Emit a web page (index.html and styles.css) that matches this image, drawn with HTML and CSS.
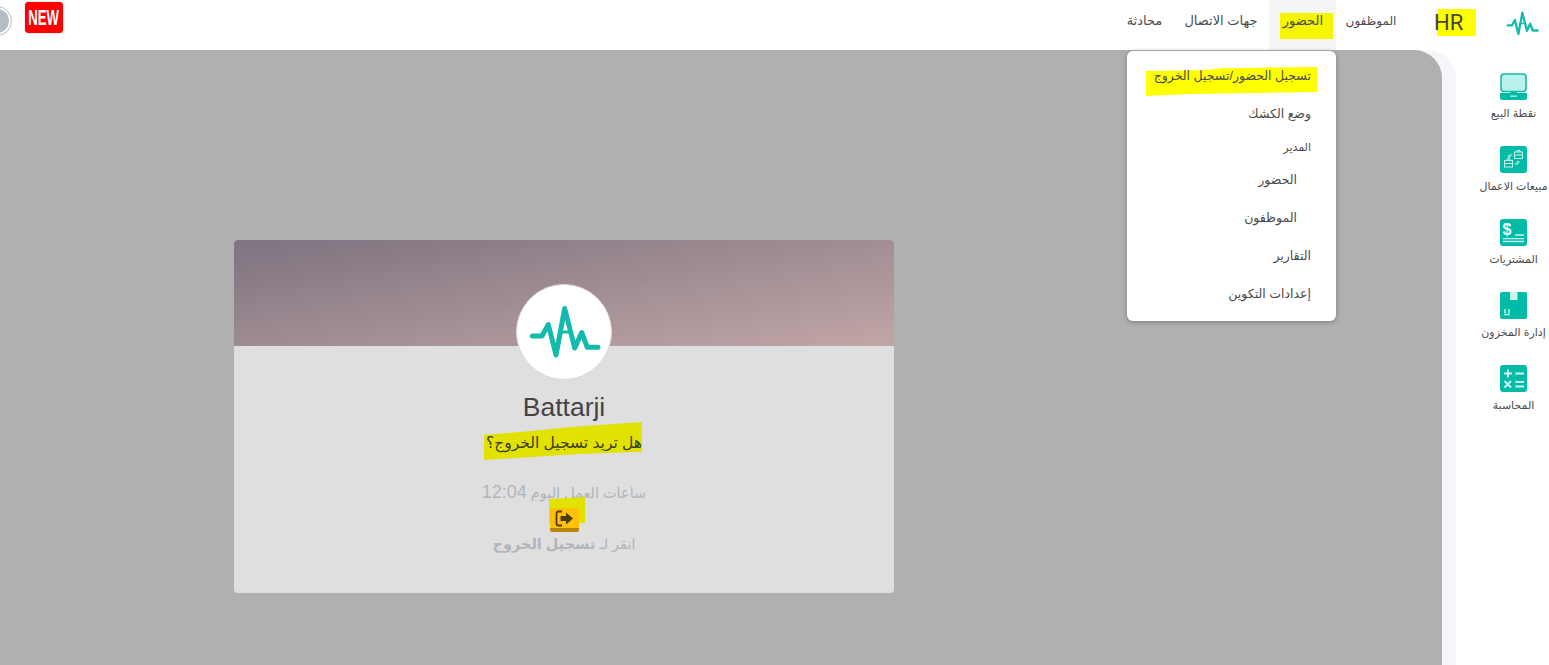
FILE: index.html
```html
<!DOCTYPE html>
<html lang="ar" dir="rtl">
<head>
    <meta charset="UTF-8">
    <meta name="viewport" content="width=device-width, initial-scale=1.0">
    <title>Battarji</title>
    <link rel="stylesheet" href="styles.css">
</head>
<body>
    <svg class="defs" width="0" height="0">
        <symbol id="pulse" viewBox="0 0 72 54">
            <path d="M3.5 31H13L19.3 19.5 27 50 35.7 3.5 45.7 43 52.7 27.5 58.3 42.3H69" fill="none" stroke="#12bbaa" stroke-width="5" stroke-linecap="round" stroke-linejoin="round"/>
            <path d="M32 27H41" stroke="#12bbaa" stroke-width="3"/>
        </symbol>
    </svg>

    <header class="topbar">
        <svg class="top-logo"><use href="#pulse"/></svg>
        <div class="app-name"><span class="mark mark-hr"></span><span class="app-text">HR</span></div>
        <nav class="nav">
            <a class="nav-item nav-staff">الموظفون</a>
            <a class="nav-item nav-attendance active"><span class="mark mark-nav"></span><span class="nav-text">الحضور</span>
                <div class="menu">
                    <div class="menu-item first"><span class="mark mark-menu"></span><span class="nav-text">تسجيل الحضور/تسجيل الخروج</span></div>
                    <div class="menu-item">وضع الكشك</div>
                    <div class="menu-head">المدير</div>
                    <div class="menu-item sub">الحضور</div>
                    <div class="menu-item sub">الموظفون</div>
                    <div class="menu-item">التقارير</div>
                    <div class="menu-item">إعدادات التكوين</div>
                </div>
            </a>
            <a class="nav-item nav-contacts">جهات الاتصال</a>
            <a class="nav-item nav-chat">محادثة</a>
        </nav>
        <div class="top-left">
            <div class="new-badge" dir="ltr"><span class="new-text">NEW</span></div>
            <div class="avatar"></div>
        </div>
    </header>

    <div class="layout">
        <aside class="sidebar">
            <a class="side-item">
                <svg class="side-icon" viewBox="0 0 27 27">
                    <rect x="1" y="1" width="25" height="17.5" rx="3" fill="#b9f2ec" stroke="#14bcaa" stroke-width="1.6"/>
                    <path d="M10 19H17V20.5H10Z" fill="#00bba5"/>
                    <path d="M0 20H27V24.5A2.5 2.5 0 0 1 24.5 27H2.5A2.5 2.5 0 0 1 0 24.5Z" fill="#00bba5"/>
                    <rect x="10" y="22.5" width="7" height="1.3" fill="#b9f2ec"/>
                </svg>
                <span>نقطة البيع</span>
            </a>
            <a class="side-item">
                <svg class="side-icon" viewBox="0 0 27 27">
                    <rect width="27" height="27" rx="3" fill="#00bba5"/>
                    <g fill="none" stroke="#c9f5ef" stroke-width="1">
                        <rect x="14.5" y="6" width="8" height="6.5"/>
                        <path d="M17 6V4.5H20V6M14.5 9H22.5"/>
                        <rect x="4.5" y="14.5" width="8" height="6.5"/>
                        <path d="M7 14.5V13H10V14.5M4.5 17.5H12.5"/>
                        <path d="M12.5 9H9V12M7.5 10.5L9 12 10.5 10.5"/>
                        <path d="M14.5 18H18V15M16.5 16.5L18 15 19.5 16.5"/>
                    </g>
                </svg>
                <span>مبيعات الاعمال</span>
            </a>
            <a class="side-item">
                <svg class="side-icon" viewBox="0 0 27 27">
                    <rect width="27" height="27" rx="3" fill="#00bba5"/>
                    <text class="dollar" x="7" y="15.5" text-anchor="middle">$</text>
                    <path d="M15 16H24M3 19.7H24M3 22.5H24" stroke="#c9f5ef" stroke-width="1.3"/>
                </svg>
                <span>المشتريات</span>
            </a>
            <a class="side-item">
                <svg class="side-icon" viewBox="0 0 27 27">
                    <rect width="27" height="27" rx="2" fill="#00bba5"/>
                    <rect x="10" y="0" width="7.5" height="8" fill="#c9f5ef"/>
                    <path d="M5 17V21M9 17V21M4 22.5H10" stroke="#c9f5ef" stroke-width="1.5"/>
                </svg>
                <span>إدارة المخزون</span>
            </a>
            <a class="side-item">
                <svg class="side-icon" viewBox="0 0 27 27">
                    <rect width="27" height="27" rx="3" fill="#00bba5"/>
                    <path d="M8 4.5V12.5M4 8.5H12M15.5 8.5H24M4.5 16L11 22.5M11 16L4.5 22.5M15.5 17H24M15.5 21.5H24" stroke="#d4f7f2" stroke-width="2"/>
                </svg>
                <span>المحاسبة</span>
            </a>
        </aside>

        <div class="content-wrap">
            <main class="content">
                <section class="card">
                    <div class="card-top"></div>
                    <div class="card-logo">
                        <svg class="card-logo-img"><use href="#pulse"/></svg>
                    </div>
                    <div class="card-body">
                        <h1 class="company" dir="ltr">Battarji</h1>
                        <div class="question"><span class="mark mark-question"></span><span class="nav-text">هل تريد تسجيل الخروج؟</span></div>
                        <div class="hours">ساعات العمل اليوم <span class="hours-num">12:04</span></div>
                        <div class="check-wrap">
                            <span class="mark mark-button"></span>
                            <button class="check-button">
                                <svg width="19" height="17" viewBox="0 0 19 17">
                                    <path d="M7 1.5H3.5A2 2 0 0 0 1.5 3.5V13.5A2 2 0 0 0 3.5 15.5H7" fill="none" stroke="#4a3c08" stroke-width="1.8"/>
                                    <path d="M5.5 6H11V2.5L18 8.5 11 14.5V11H5.5Z" fill="#4a3c08"/>
                                </svg>
                            </button>
                        </div>
                        <div class="hint">انقر لـ <b>تسجيل الخروج</b></div>
                    </div>
                </section>
            </main>
        </div>
    </div>
</body>
</html>
```

FILE: styles.css
```css
/* page */
html, body {
    height: 100%;
}

body {
    font-family: "Liberation Sans", "DejaVu Sans", sans-serif;
    font-size: 13px;
    color: #4c4c4c;
    margin: 0;
    background: #fff;
    overflow: hidden;
    display: flex;
    flex-direction: column;
}

.defs {
    position: absolute;
}

/* marker highlights drawn over the screenshot */
.mark {
    position: absolute;
    background: #ffff00;
}

.nav-text, .app-text {
    position: relative;
}

.mark-hr {
    left: 3px;
    top: 0;
    width: 39px;
    height: 27px;
}

.mark-nav {
    left: 11px;
    top: 13px;
    width: 53px;
    height: 26px;
    background: #f5f500;
}

.mark-menu {
    left: 19px;
    top: 10px;
    width: 171px;
    height: 29px;
    clip-path: polygon(0 14%, 35% 10%, 45% 4%, 100% 0, 100% 86%, 25% 93%, 0 100%);
}

.mark-question {
    left: 50%;
    margin-left: -80px;
    top: -9px;
    width: 158px;
    height: 38px;
    background: #e2e200;
    clip-path: polygon(0 34%, 30% 24%, 55% 13%, 100% 0, 100% 78%, 60% 84%, 30% 92%, 0 100%);
}

.mark-button {
    left: 50%;
    margin-left: -15px;
    top: -11px;
    width: 36px;
    height: 26px;
    background: #e2e200;
    clip-path: polygon(0 8%, 100% 0, 100% 100%, 0 100%);
}

/* top bar */
.topbar {
    height: 50px;
    flex-shrink: 0;
    display: flex;
    position: relative;
    z-index: 2;
    background: #fff;
}

.top-logo {
    width: 33px;
    height: 25px;
    margin: 11px 10px 0 0;
}

.app-name {
    position: relative;
    width: 42px;
    margin: 9px 30px 0 0;
    font-family: Roboto, sans-serif;
    font-size: 22px;
    line-height: 28px;
    color: #444;
    text-align: left;
    direction: ltr;
}

.nav {
    display: flex;
    margin-right: 28px;
}

.nav-item {
    position: relative;
    height: 50px;
    box-sizing: border-box;
    padding-top: 13px;
    line-height: 16px;
    font-size: 13px;
    text-align: center;
}

.nav-staff {
    width: 70px;
    font-size: 12px;
}

.nav-attendance {
    width: 67px;
    text-align: right;
}

.nav-attendance .nav-text {
    margin-right: 13px;
}

.nav-contacts {
    width: 96px;
}

.nav-chat {
    width: 57px;
}

.nav-item.active {
    background: #f5f5f5;
}

/* dropdown */
.menu {
    position: absolute;
    top: 51px;
    right: 0;
    width: 209px;
    box-sizing: border-box;
    padding: 6px 0 8px;
    background: #fff;
    border-radius: 6px;
    box-shadow: 0 1px 5px rgba(0, 0, 0, 0.3);
}

.menu-item {
    position: relative;
    height: 38px;
    line-height: 38px;
    padding-right: 25px;
    font-size: 12.5px;
    text-align: right;
}

.menu-item .nav-text {
    margin-right: 0;
}

.menu-item.sub {
    padding-right: 39px;
}

.menu-head {
    height: 28px;
    line-height: 28px;
    padding-right: 25px;
    font-size: 11px;
    text-align: right;
}

.top-left {
    margin-right: auto;
    display: flex;
    align-items: flex-start;
}

.new-badge {
    width: 38px;
    height: 31px;
    margin: 2px 0 0 14px;
    background: #ff0000;
    border-radius: 4px;
    box-shadow: 0 0 1px rgba(160, 0, 0, 0.8);
    color: #fff;
    font-family: "Liberation Sans", sans-serif;
    font-size: 22px;
    font-weight: bold;
    line-height: 31px;
    text-align: center;
    overflow: hidden;
    display: flex;
    justify-content: center;
}

.new-text {
    flex-shrink: 0;
    transform: scaleX(0.6);
}

.avatar {
    width: 24px;
    height: 24px;
    margin: 7px 0 0 -17px;
    border: 2px solid #fff;
    outline: 1px solid #b4bcc4;
    border-radius: 50%;
    background: #b4bcc4;
}

/* body */
.layout {
    flex: 1;
    display: flex;
    min-height: 0;
}

.sidebar {
    width: 93px;
    flex-shrink: 0;
    box-sizing: border-box;
    padding: 23px 0 0 22px;
}

.side-item {
    height: 73px;
    display: flex;
    flex-direction: column;
    align-items: center;
    font-size: 11px;
    white-space: nowrap;
}

.side-icon {
    width: 27px;
    height: 27px;
    margin-bottom: 5px;
}

.side-item span {
    line-height: 16px;
}

.dollar {
    font-family: "Liberation Sans", sans-serif;
    font-size: 16px;
    font-weight: bold;
    fill: #fff;
}

.content-wrap {
    flex: 1;
    background: #f5f6fa;
    border-top-right-radius: 28px;
    padding-right: 14px;
    display: flex;
}

.content {
    flex: 1;
    background: #b0b0b0;
    border-top-right-radius: 28px;
    padding: 190px 0 0 234px;
    direction: ltr;
}

/* check in card */
.card {
    position: relative;
    width: 660px;
    height: 353px;
    border-radius: 4px;
    overflow: hidden;
    background: #e0dfe0;
    text-align: center;
}

.card-top {
    height: 106px;
    background: linear-gradient(170deg, #7d7380, #c2a6a6);
}

.card-logo {
    position: absolute;
    left: 282px;
    top: 44px;
    width: 96px;
    height: 96px;
    box-sizing: border-box;
    padding: 20px 12px;
    border: 1px solid #d8d8d8;
    border-radius: 50%;
    background: #fff;
}

.card-logo-img {
    width: 72px;
    height: 54px;
}

.card-body {
    direction: rtl;
    padding-top: 44px;
}

.company {
    margin: 0;
    font-size: 26.5px;
    font-weight: normal;
    line-height: 34px;
    color: #454348;
}

.question {
    position: relative;
    margin-top: 7px;
    font-size: 15.5px;
    line-height: 24px;
    color: #3d3d20;
}

.hours {
    margin-top: 26px;
    font-size: 14.5px;
    line-height: 22px;
    color: #b0b5bc;
}

.hours-num {
    font-size: 18px;
}

.check-wrap {
    position: relative;
    height: 24px;
    margin-top: 4px;
}

.check-button {
    position: relative;
    width: 29px;
    height: 24px;
    padding: 0;
    border: none;
    border-bottom: 4px solid #b8860b;
    border-radius: 2px;
    background: #ffc107;
    display: inline-flex;
    align-items: center;
    justify-content: center;
}

.hint {
    margin-top: 1px;
    font-size: 14.5px;
    line-height: 22px;
    color: #b0b5bc;
}
```
